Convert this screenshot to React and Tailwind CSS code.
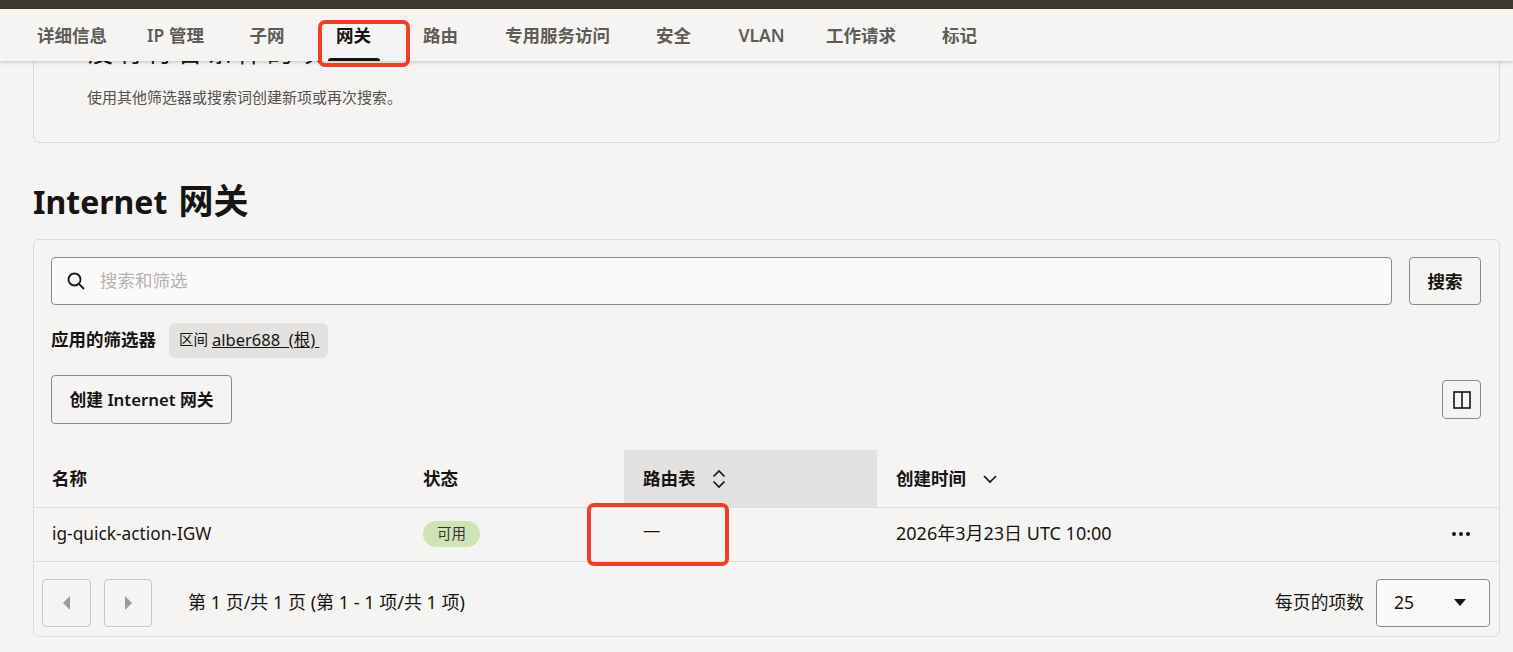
const FONT = "font-['Noto_Sans','Noto_Sans_CJK_SC',sans-serif]";

const tabs = [
  { t: "详细信息", w: "w-[70px]", mr: "mr-[41px]" },
  { t: "IP 管理", w: "w-[55px]", mr: "mr-[46px]" },
  { t: "子网", w: "w-[36px]", mr: "mr-[51px]" },
  { t: "网关", w: "w-[35px]", mr: "mr-[52px]", active: true },
  { t: "路由", w: "w-[35px]", mr: "mr-[47px]" },
  { t: "专用服务访问", w: "w-[105px]", mr: "mr-[46px]" },
  { t: "安全", w: "w-[35px]", mr: "mr-[47px]" },
  { t: "VLAN", w: "w-[47px]", mr: "mr-[41px]" },
  { t: "工作请求", w: "w-[70px]", mr: "mr-[46px]" },
  { t: "标记", w: "w-[35px]", mr: "" },
];

function Tab({ t, w, mr, active }) {
  return (
    <div className={`relative h-full flex items-center justify-center whitespace-nowrap text-[17.5px] font-semibold ${w} ${mr} ${active ? "text-[#161513]" : "text-[#5f5b56]"}`}>
      <span>{t}</span>
      {active && <div className="absolute bottom-0 left-[-8px] right-[-9px] h-[3px] bg-[#161513] rounded-t-[3px]" />}
    </div>
  );
}

export default function App() {
  return (
    <div className={`${FONT} relative h-[652px] w-[1513px] overflow-hidden bg-[#f5f4f2] text-[#161513]`}>
      <div className="h-[9px] bg-[#3c3831]" />
      <nav className="relative z-10 h-[52px] flex items-center pl-[37px] bg-[#f5f4f2] shadow-[0_1px_4px_rgba(0,0,0,0.2)]">
        {tabs.map((x) => <Tab key={x.t} {...x} />)}
      </nav>

      <main className="h-[591px] overflow-hidden pl-[33px] pr-[13px]">
        <section className="-mt-[30px] h-[112px] rounded-b-[6px] border border-t-0 border-[#dedcd9] pl-[53px] pt-[5px]">
          <div className="h-[32px] text-[26px] leading-[32px] tracking-[4px] whitespace-nowrap">没有符合条件的项</div>
          <p className="mt-[20px] text-[15px] leading-[18px] text-[#55514c]">使用其他筛选器或搜索词创建新项或再次搜索。</p>
        </section>

        <h1 className="mt-[35px] h-[46px] leading-[46px] font-bold whitespace-nowrap">
          <span className="text-[32px]">Internet</span>
          <span className="ml-[2px] text-[35px]"> 网关</span>
        </h1>

        <section className="mt-[15px] h-[398px] rounded-[6px] border border-[#dedcd9]">
          <div className="flex gap-[17px] pl-[17px] pr-[18px] pt-[17px]">
            <div className="flex-1 h-[48px] flex items-center rounded-[4px] border border-[#8d8a86] bg-[#fbfaf9] pl-[15px]">
              <svg width="18" height="18" viewBox="0 0 18 18" fill="none" stroke="#161513" strokeWidth="1.8">
                <circle cx="7.5" cy="7.5" r="6" />
                <path d="M12 12l5 5" />
              </svg>
              <span className="ml-[15px] -mt-[1px] text-[17.5px] text-[#b5b3b0]">搜索和筛选</span>
            </div>
            <button className="w-[72px] h-[48px] rounded-[4px] border border-[#8d8a86] text-[17.5px] font-semibold">搜索</button>
          </div>

          <div className="flex items-center pl-[17px] mt-[18px] h-[35px]">
            <span className="text-[17.5px] font-semibold -mt-[3px]">应用的筛选器</span>
            <div className="ml-[13px] h-[35px] w-[159px] flex items-center rounded-[6px] bg-[#e4e2e0] pl-[10px] text-[14.500px] whitespace-nowrap">
              <span className="-mt-[1px]">区间</span>
              <span className="ml-[4px] -mt-[1px] underline text-[16.500px]">alber688&nbsp;&nbsp;(根)&nbsp;</span>
            </div>
          </div>

          <div className="flex items-center justify-between pl-[17px] pr-[18px] mt-[17px] h-[49px]">
            <button className="w-[181px] h-[49px] rounded-[4px] border border-[#8d8a86] text-[16.800px] font-semibold">创建 Internet 网关</button>
            <button className="w-[39px] h-[39px] flex items-center justify-center rounded-[4px] border border-[#8d8a86]">
              <svg width="18" height="18" viewBox="0 0 18 18" fill="none" stroke="#161513" strokeWidth="1.6">
                <rect x="1" y="1" width="16" height="16" />
                <path d="M9 1v16" />
              </svg>
            </button>
          </div>

          <div className="mt-[26px] flex h-[58px] border-b border-[#dedcd9] text-[17.5px] font-semibold">
            <div className="w-[372px] pl-[18px] flex items-center">名称</div>
            <div className="w-[218px] pl-[17px] flex items-center">状态</div>
            <div className="w-[253px] pl-[19px] flex items-center bg-[#e4e2e0]">
              路由表
              <svg className="ml-[16px]" width="14" height="20" viewBox="0 0 14 20" fill="none" stroke="#161513" strokeWidth="1.7">
                <path d="M1.5 7.5L7 2l5.500 5.500" />
                <path d="M1.5 12.500L7 18l5.500-5.500" />
              </svg>
            </div>
            <div className="flex-1 pl-[19px] flex items-center">
              创建时间
              <svg className="ml-[17px]" width="14" height="10" viewBox="0 0 14 10" fill="none" stroke="#161513" strokeWidth="1.7">
                <path d="M1 2l6 6 6-6" />
              </svg>
            </div>
          </div>

          <div className="flex h-[54px] items-center border-b border-[#dedcd9] text-[17.3px]">
            <div className="w-[372px] pl-[18px] -mt-[2px]">ig-quick-action-IGW</div>
            <div className="w-[218px] pl-[17px] -mt-[2px]">
              <span className="flex w-[57px] h-[26px] items-center justify-center rounded-full bg-[#cfe4b6] text-[14.500px] text-[#33352c]">可用</span>
            </div>
            <div className="w-[253px] pl-[19px] -mt-[7px]">—</div>
            <div className="w-[500px] pl-[19px] whitespace-nowrap -mt-[2px] text-[18px]">2026年3月23日 UTC 10:00</div>
            <div className="flex-1 flex justify-end pr-[29px] gap-[3px] -mt-[2px]">
              <span className="w-[4px] h-[4px] rounded-full bg-[#161513]" />
              <span className="w-[4px] h-[4px] rounded-full bg-[#161513]" />
              <span className="w-[4px] h-[4px] rounded-full bg-[#161513]" />
            </div>
          </div>

          <div className="flex items-center h-[74px] pl-[8px] pr-[9px] pt-[7px]">
            <button className="w-[49px] h-[48px] flex items-center justify-center rounded-[4px] border border-[#c9c7c4]">
              <svg width="8" height="14" viewBox="0 0 8 14"><path d="M7 0v14L0 7z" fill="#9e9c99" /></svg>
            </button>
            <button className="ml-[13px] w-[48px] h-[48px] flex items-center justify-center rounded-[4px] border border-[#c9c7c4]">
              <svg width="8" height="14" viewBox="0 0 8 14"><path d="M1 0v14l7-7z" fill="#9e9c99" /></svg>
            </button>
            <span className="ml-[36px] text-[18px] whitespace-nowrap">第 1 页/共 1 页 (第 1 - 1 项/共 1 项)</span>
            <span className="ml-auto text-[17.800px]">每页的项数</span>
            <div className="ml-[12px] w-[114px] h-[48px] flex items-center justify-between rounded-[4px] border border-[#8d8a86] bg-[#fbfaf9] pl-[17px] pr-[23px] text-[17.5px]">
              <span>25</span>
              <svg width="12" height="7" viewBox="0 0 12 7"><path d="M0 0h12L6 7z" fill="#161513" /></svg>
            </div>
          </div>
        </section>
      </main>

      <div className="absolute z-20 left-[318px] top-[20px] w-[92px] h-[47px] rounded-[7px] border-[4px] border-[#ee4027]" />
      <div className="absolute z-20 left-[587px] top-[503px] w-[142px] h-[63px] rounded-[7px] border-[4px] border-[#ee4027]" />
    </div>
  );
}
